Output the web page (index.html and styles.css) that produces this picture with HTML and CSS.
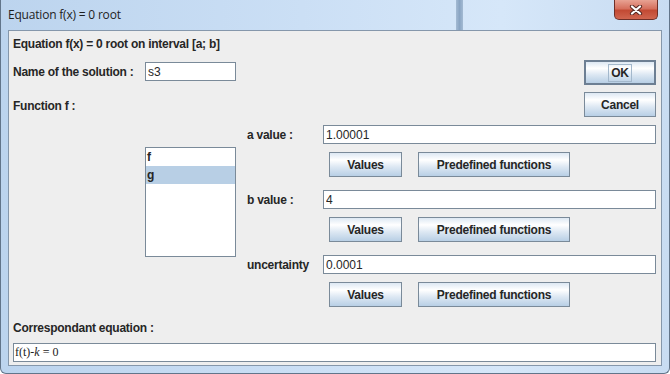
FILE: index.html
```html
<!DOCTYPE html>
<html lang="en">
<head>
<meta charset="UTF-8">
<title>Equation f(x) = 0 root</title>
<link rel="stylesheet" href="styles.css">
</head>
<body>
<div class="window">
  <div class="titlebar">
    <span class="title">Equation f(x) = 0 root</span>
    <span class="stripe"></span>
    <button class="close">
      <svg width="14" height="10" viewBox="0 0 14 10">
        <path d="M3 1.5 L11 8.5 M11 1.5 L3 8.5" stroke="#5a2a24" stroke-width="4.2" stroke-linecap="round"/>
        <path d="M3 1.5 L11 8.5 M11 1.5 L3 8.5" stroke="#ffffff" stroke-width="2.2" stroke-linecap="round"/>
      </svg>
    </button>
  </div>

  <div class="content">
    <div class="top">
      <div class="top-left">
        <div class="label heading">Equation f(x) = 0 root on interval [a; b]</div>
        <div class="name-row">
          <span class="label name-label">Name of the solution :</span>
          <input class="field name-field" type="text" value="s3">
        </div>
        <div class="label fn-label">Function f :</div>
      </div>
      <div class="actions">
        <button class="btn default"><span class="focus">OK</span></button>
        <button class="btn cancel">Cancel</button>
      </div>
    </div>

    <div class="main">
      <ul class="list">
        <li>f</li>
        <li class="selected">g</li>
      </ul>
      <div class="form">
        <div class="field-row">
          <span class="label field-label">a value :</span>
          <input class="field" type="text" value="1.00001">
        </div>
        <div class="btn-row">
          <button class="btn values">Values</button>
          <button class="btn predef">Predefined functions</button>
        </div>
        <div class="field-row">
          <span class="label field-label">b value :</span>
          <input class="field" type="text" value="4">
        </div>
        <div class="btn-row">
          <button class="btn values">Values</button>
          <button class="btn predef">Predefined functions</button>
        </div>
        <div class="field-row">
          <span class="label field-label">uncertainty</span>
          <input class="field" type="text" value="0.0001">
        </div>
        <div class="btn-row">
          <button class="btn values">Values</button>
          <button class="btn predef">Predefined functions</button>
        </div>
      </div>
    </div>

    <div class="label eq-label">Correspondant equation :</div>
    <div class="eq-field">f(t)-<i>k</i> = 0</div>
  </div>
</div>
</body>
</html>
```

FILE: styles.css
```css
/* fenetre facon Windows 7 */
body {
margin: 0;
background: #ffffff;
}

.window {
width: 670px;
height: 374px;
box-sizing: border-box;
padding: 0 7px 7px 7px;
background: linear-gradient(to right, #bcd4ee 0%, #cbdff5 45%, #d6e7f9 75%, #c8dcf2 100%);
border: 1px solid #62758a;
border-top: none;
border-radius: 0 0 6px 6px;
display: flex;
flex-direction: column;
}

.titlebar {
height: 30px;
margin: 0 -7px;
display: flex;
align-items: flex-start;
justify-content: space-between;
position: relative;
}

.title {
font-family: "Open Sans", "Noto Sans", sans-serif;
font-size: 12px;
letter-spacing: -0.2px;
color: #1e1e1e;
margin: 6px 0 0 7px;
line-height: 18px;
}

.stripe {
position: absolute;
left: 455px;
top: 0;
width: 7px;
height: 30px;
background: linear-gradient(to right, #a3bad3, #8aa5c3, #a3bad3);
}

.close {
width: 44px;
height: 20px;
margin-right: 11px;
padding: 0;
border: 1px solid #6e2f28;
border-top: none;
border-radius: 0 0 5px 5px;
background: linear-gradient(#e8a293 0%, #d6705e 45%, #c24a34 55%, #d0654f 100%);
display: flex;
align-items: center;
justify-content: center;
}

/* zone de contenu */
.content {
flex: 1;
background: #eeeeee;
border: 1px solid #8597ab;
padding: 0 5px 0 4px;
font-family: "Liberation Sans", Arial, sans-serif;
font-size: 12px;
color: #262626;
}

.label {
font-weight: bold;
line-height: 14px;
letter-spacing: -0.25px;
white-space: nowrap;
}

.top {
display: flex;
justify-content: space-between;
padding-top: 6px;
}

.name-row {
display: flex;
align-items: center;
margin-top: 11px;
}

.name-label {
width: 132px;
}

.fn-label {
margin-top: 18px;
}

.field {
height: 19px;
box-sizing: border-box;
border: 1px solid #7a8a99;
background: #ffffff;
font-family: "Liberation Sans", Arial, sans-serif;
font-size: 12px;
color: #262626;
padding: 0 2px;
margin: 0;
outline: none;
}

.name-field {
width: 91px;
}

.actions {
display: flex;
flex-direction: column;
gap: 7px;
margin-top: 23px;
}

.btn {
height: 25px;
box-sizing: border-box;
border: 1px solid #7a8a99;
background: linear-gradient(#dde8f3 0%, #ffffff 30%, #dde8f3 60%, #b8cfe5 100%);
font-family: "Liberation Sans", Arial, sans-serif;
font-size: 12px;
font-weight: bold;
letter-spacing: -0.25px;
color: #262626;
padding: 0;
margin: 0;
}

.actions .btn {
width: 72px;
}

.btn.default {
border: 2px solid #6d7f93;
}

.focus {
border: 1px solid #a3b8cc;
padding: 1px 2px;
}

.main {
display: flex;
margin-top: 8px;
padding-left: 132px;
}

.list {
list-style: none;
margin: 22px 0 0 0;
padding: 0;
width: 91px;
height: 110px;
box-sizing: border-box;
border: 1px solid #7a8a99;
background: #ffffff;
}

.list li {
height: 18px;
line-height: 18px;
padding-left: 1px;
font-weight: bold;
}

.list li.selected {
background: #b8cfe5;
}

.form {
flex: 1;
margin-left: 11px;
}

.field-row {
display: flex;
align-items: center;
margin-top: 13px;
}

.field-row:first-child {
margin-top: 0;
}

.field-label {
width: 76px;
}

.field-row .field {
flex: 1;
}

.btn-row {
display: flex;
gap: 16px;
margin-top: 8px;
padding-left: 82px;
}

.values {
width: 73px;
}

.predef {
width: 152px;
}

.eq-label {
margin-top: 14px;
}

.eq-field {
margin-top: 8px;
height: 19px;
box-sizing: border-box;
border: 1px solid #7a8a99;
background: #ffffff;
font-family: "Liberation Serif", "Times New Roman", serif;
font-size: 12px;
line-height: 17px;
color: #222222;
padding-left: 1px;
}

.eq-field i {
font-style: italic;
}
```
